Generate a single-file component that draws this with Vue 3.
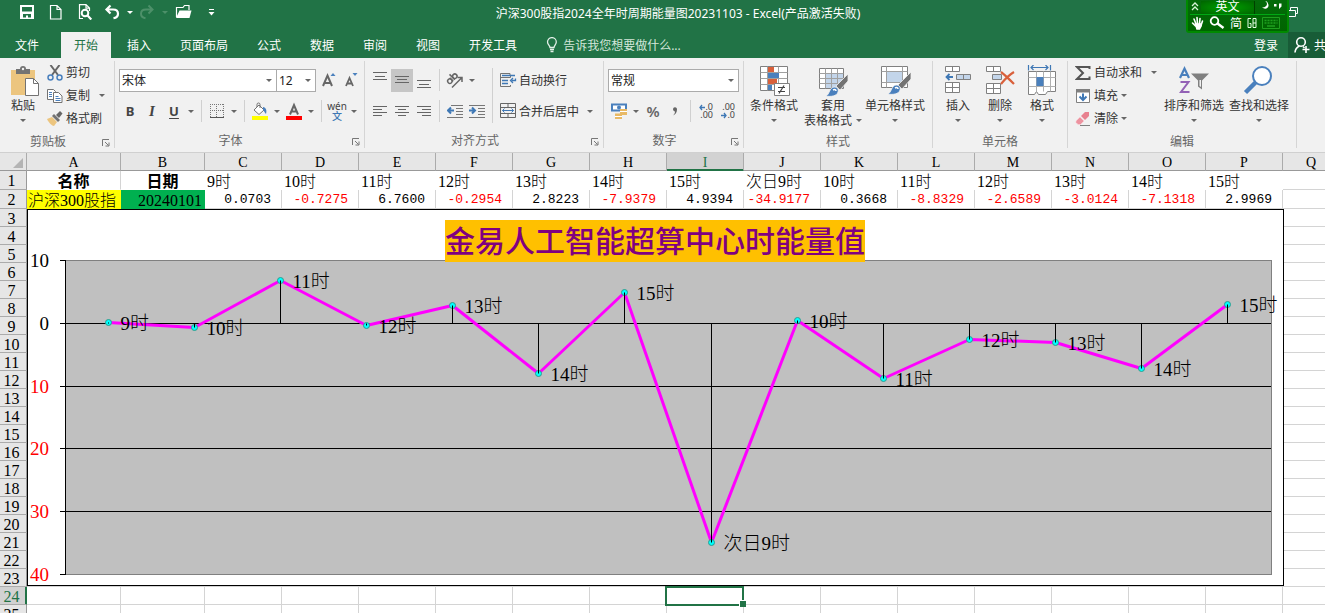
<script setup>
import { ref } from 'vue'

const tabs = ['开始', '插入', '页面布局', '公式', '数据', '审阅', '视图', '开发工具']
const activeTab = ref('开始')
const fontName = ref('宋体')
const fontSize = ref('12')
const numberFormat = ref('常规')

const letters = 'ABCDEFGHIJKLMNOPQ'.split('')
const hours = ['9时', '10时', '11时', '12时', '13时', '14时', '15时', '次日9时', '10时', '11时', '12时', '13时', '14时', '15时']
const values = [0.0703, -0.7275, 6.76, -0.2954, 2.8223, -7.9379, 4.9394, -34.9177, 0.3668, -8.8329, -2.6589, -3.0124, -7.1318, 2.9969]
const emptyRows = Array.from({ length: 23 }, (_, i) => i + 3)

const plot = { left: 39, right: 1245, top: 51, bottom: 365 }
const max = 10
const min = -40
const yOf = (v) => plot.top + ((max - v) / (max - min)) * (plot.bottom - plot.top)
const lineY = (v) => Math.round(yOf(v)) + 0.5
const step = (plot.right - plot.left) / values.length
const points = values.map((v, i) => ({
  x: Math.floor(plot.left + step * (i + 0.5)) - 0.5,
  y: Math.round(yOf(v)) + 0.5,
  label: hours[i],
}))
const polyline = points.map((p) => `${p.x},${p.y}`).join(' ')
const ticks = [10, 0, -10, -20, -30, -40]
</script>

<template>
  <div class="app">
    <header class="top">
      <div class="titlebar">
        <div class="qat">
          <button class="q w30" aria-label="保存">
            <svg width="16" height="16" viewBox="0 0 16 16"><path fill="#fff" fill-rule="evenodd" d="M1 1h14v14H1zM3 3v4.500h10V3zM4 10v3.500h3V11.500h2v2h3V10z" /></svg>
          </button>
          <button class="q w30" aria-label="新建">
            <svg width="16" height="16" viewBox="0 0 16 16" fill="none" stroke="#fff" stroke-width="1.2"><path d="M2.500 1.500h6.500l4 4v9.500H2.500z M9 1.500v4h4" /></svg>
          </button>
          <button class="q w30" aria-label="打印预览">
            <svg width="16" height="16" viewBox="0 0 16 16" fill="none" stroke="#fff" stroke-width="1.200"><path d="M6 14.500H2.500V.600h6.500l3.500 3.500V7M9 .600v3.500h3.500" /><circle cx="8" cy="9" r="3.300" stroke-width="2" /><path d="M10.500 11.500l3.800 4" stroke-width="2.200" /></svg>
          </button>
          <button class="q w26" aria-label="撤消">
            <svg width="16" height="16" viewBox="0 0 16 16" fill="none" stroke="#fff" stroke-width="2.200"><path d="M6.500 1.500L2.500 5.500l4 4M2.500 5.500h6.500c3.500 0 5 1.700 5 4.200 0 2.400-1.500 4-4.500 4.500" /></svg>
          </button>
          <button class="q w10" aria-label="撤消列表"><i class="caret light"></i></button>
          <button class="q w26" aria-label="重做" disabled>
            <svg width="16" height="16" viewBox="0 0 16 16" fill="none" stroke="#4d9069" stroke-width="2"><path d="M9.500 1.500l4 4-4 4M13.500 5.500H7C3.500 5.500 2 7.200 2 9.700c0 2.400 1.500 4 4.500 4.500" /></svg>
          </button>
          <button class="q w10" aria-label="重做列表" disabled><i class="caret dim"></i></button>
          <button class="q w28" aria-label="打开">
            <svg width="17" height="16" viewBox="0 0 17 16"><path d="M1.500 13V3.500H8L9.500 1.500H14V6" fill="none" stroke="#fff" stroke-width="1.200" /><path d="M1 14L4.500 6.500H16.500L14.500 14z" fill="#fff" /></svg>
          </button>
          <button class="q w28" aria-label="自定义快速访问工具栏">
            <svg width="7" height="8" viewBox="0 0 7 8" fill="#fff"><path d="M1 1h5v1H1zM.5 4h6l-3 3.500z" /></svg>
          </button>
        </div>
        <h1 class="title">沪深300股指2024全年时周期能量图20231103 - Excel(产品激活失败)</h1>
        <div class="winctl">
          <button class="q" aria-label="还原">
            <svg width="12" height="12" viewBox="0 0 12 12" fill="none" stroke="#fff"><path d="M.5 4.500h8v6h-8zM3.500 4V1.500h7v6H9" /></svg>
          </button>
        </div>
      </div>

      <nav class="tabs">
        <button class="tab file">文件</button>
        <button v-for="t in tabs" :key="t" class="tab" :class="{ active: t === activeTab }" @click="activeTab = t">{{ t }}</button>
        <label class="tell">
          <svg width="12" height="16" viewBox="0 0 12 16" fill="none" stroke="#e3efe8" stroke-width="1.300"><path d="M4 10.500C4 8.500 1.500 7.500 1.500 5a4.300 4.300 0 0 1 8.800 0C10.300 7.500 8 8.500 8 10.500zM4 12.500h4M4.500 14.500h3" /></svg>
          <input type="text" placeholder="告诉我您想要做什么..." aria-label="告诉我您想要做什么" />
        </label>
        <span class="grow"></span>
        <button class="login">登录</button>
        <button class="share">
          <svg width="16" height="18" viewBox="0 0 16 18" fill="none" stroke="#fff" stroke-width="1.600"><circle cx="7" cy="6" r="4.300" /><path d="M1 16.500c.3-3.500 2-5.500 4.500-6.500M9 10.500l1.500 1.500M8.500 13.500h7M12 10v7" /></svg>
          <span>共享</span>
        </button>
      </nav>

      <div class="ime" role="toolbar" aria-label="输入法">
        <div class="ime-row">
          <svg width="10" height="12" viewBox="0 0 10 12" fill="none" stroke="#d8f5d8" stroke-width="1.300"><path d="M2 5l3-3 3 3M2 9l3-3 3 3" /></svg>
          <button class="ime-lang">英文</button>
          <svg width="30" height="12" viewBox="0 0 30 12" fill="#fff"><path d="M9 0c3 1.500 3 6-3 6.500 4 3 8-.5 6-4C11.500 1 11 0 9 0zM18 3h2.500v2.500H18zM23 2.500h2.500v3L23 8z" /></svg>
        </div>
        <div class="ime-row low">
          <svg width="13" height="14" viewBox="0 0 13 14" fill="none" stroke="#fff" stroke-width="1.600" stroke-linecap="round"><path d="M3 3l2 5M6 1.500l.5 6M9 2.500L8.500 8M11.500 5L10 9.500M1.500 7l3 3" /><path d="M4.500 8h5.500v2l-1.500 3H6z" fill="#fff" /></svg>
          <svg width="16" height="14" viewBox="0 0 16 14" fill="none" stroke="#fff"><circle cx="5.500" cy="5" r="3.800" stroke-width="1.800" /><path d="M8.500 7.500l6 4.500" stroke-width="2.500" /></svg>
          <span>简</span>
          <svg width="10" height="12" viewBox="0 0 10 12" fill="none" stroke="#e8ffe8"><path d="M4 1.500H1v9h3V6.500H2.500M6 1.500h3v9H6zM6 6h3" /></svg>
          <svg width="18" height="12" viewBox="0 0 18 12" fill="none" stroke="#1fa01f"><path d="M.5.500h17v11H.5z" /><path d="M2.500 3.500h13M2.500 6h13" stroke-dasharray="2 1" stroke-width="1.500" /><path d="M5 9h8" stroke-width="1.500" /></svg>
        </div>
      </div>
    </header>

    <section class="ribbon" aria-label="功能区">
      <div class="group g-clip">
        <div class="body">
          <button class="big w46">
            <svg width="32" height="32" viewBox="0 0 32 32"><path d="M4 5h24v25H4z" fill="#ecc57f" /><path d="M9 4h4a3 3 0 0 1 6 0h4v5H9z" fill="#737373" /><circle cx="16" cy="4" r="1.200" fill="#f1f1f1" /><path d="M18.500 13.500h8l5 5v12h-13z" fill="#fff" stroke="#737373" /><path d="M26.500 13.500v5h5" fill="none" stroke="#737373" /></svg>
            <span>粘贴</span><span class="line"><i class="caret"></i></span>
          </button>
          <div class="three">
            <button class="small">
              <svg width="16" height="16" viewBox="0 0 16 16" fill="none"><path d="M3.500 0L11 10M12.500 0L5 10" stroke="#666" stroke-width="2" /><circle cx="3.500" cy="12.500" r="2.500" stroke="#4a80bd" stroke-width="1.500" /><circle cx="12.500" cy="12.500" r="2.500" stroke="#4a80bd" stroke-width="1.500" /></svg>剪切
            </button>
            <button class="small">
              <svg width="16" height="16" viewBox="0 0 16 16" fill="#fff" stroke="#737373"><path d="M.5 1.500h6l2 2v8h-8z" /><path d="M6.500 4.500h5l3.500 3.500v6.500H6.500z" /><path d="M2 4.500h3M2 6.500h3M2 8.500h3M8.500 8.500h3M8.500 10.500h5M8.500 12.500h5" stroke="#4a80bd" /></svg>复制<i class="caret gap"></i>
            </button>
            <button class="small">
              <svg width="16" height="16" viewBox="0 0 16 16"><path d="M0 8l5-2 5 5-3 4c-2 0-5-3-7-7z" fill="#ecc57f" /><path d="M5 5l2-2 6 6-2 2z" fill="#737373" /><path d="M9 4l4-4 2.500 2.500L12 7z" fill="#666" /></svg>格式刷
            </button>
          </div>
        </div>
        <div class="foot"><span>剪贴板</span><button class="launch" aria-label="剪贴板设置"><svg width="8" height="8" viewBox="0 0 8 8" fill="none" stroke="#777"><path d="M.5 7V.500H7M3 3l3.500 3.500M7 3.500V7H3.500" /></svg></button></div>
      </div>

      <div class="group g-font">
        <div class="body rows">
          <div class="row">
            <span class="combo c-name"><select v-model="fontName" aria-label="字体"><option>宋体</option><option>黑体</option></select><i class="caret"></i></span>
            <span class="combo c-size"><select v-model="fontSize" aria-label="字号"><option>12</option><option>14</option></select><i class="caret"></i></span>
            <button class="ib" aria-label="增大字号"><svg width="16" height="18" viewBox="0 0 16 18"><path d="M2 15L6.500 4.500L11 15M3.500 12h6" fill="none" stroke="#666" stroke-width="2" /><path d="M9.500 5L12 2l2.500 3z" fill="#4a80bd" /></svg></button>
            <button class="ib" aria-label="减小字号"><svg width="16" height="18" viewBox="0 0 16 18"><path d="M3 15L6.500 7L10 15M4.500 12.500h4.500" fill="none" stroke="#666" stroke-width="1.800" /><path d="M9.500 2L12 5l2.500-3z" fill="#4a80bd" /></svg></button>
          </div>
          <div class="row">
            <button class="ib bold">B</button><button class="ib ital">I</button><button class="ib und">U</button><button class="cb" aria-label="下划线选项"><i class="caret"></i></button>
            <i class="sep"></i>
            <button class="ib" aria-label="边框"><svg width="14" height="14" viewBox="0 0 14 14" fill="none" stroke="#777"><path d="M.5 0v13M13.500 0v13M6.500 0v13M0 .500h14M0 6.500h14" stroke-dasharray="1 1" /><path d="M0 13.500h14" stroke="#555" /></svg></button><button class="cb" aria-label="边框选项"><i class="caret"></i></button>
            <i class="sep"></i>
            <button class="ib" aria-label="填充颜色"><svg width="18" height="18" viewBox="0 0 18 18"><path d="M3 8l5-5 5 5-5 4.500z" fill="#fff" stroke="#737373" /><path d="M6 5V2.500a1.500 1.500 0 0 1 3 0V6" fill="none" stroke="#737373" /><path d="M12 5c3 .5 4 3 3 7-1.500-1-1.500-3-3-4z" fill="#4a80bd" /><path d="M1 14h16v4H1z" fill="#ff0" /></svg></button><button class="cb" aria-label="填充颜色选项"><i class="caret"></i></button>
            <button class="ib" aria-label="字体颜色"><svg width="16" height="18" viewBox="0 0 16 18"><path d="M4 12.500L8 3l4 9.500M5.500 9.500h5" fill="none" stroke="#666" stroke-width="2" /><path d="M0 14h16v4H0z" fill="red" /></svg></button><button class="cb" aria-label="字体颜色选项"><i class="caret"></i></button>
            <i class="sep"></i>
            <button class="ib pinyin"><span>wén</span><b>文</b></button><button class="cb" aria-label="拼音选项"><i class="caret"></i></button>
          </div>
        </div>
        <div class="foot"><span>字体</span><button class="launch" aria-label="字体设置"><svg width="8" height="8" viewBox="0 0 8 8" fill="none" stroke="#777"><path d="M.5 7V.500H7M3 3l3.500 3.500M7 3.500V7H3.500" /></svg></button></div>
      </div>

      <div class="group g-align">
        <div class="body">
          <div class="rows al">
            <div class="row">
              <button class="ib" aria-label="顶端对齐"><svg width="14" height="18" viewBox="0 0 14 18" stroke="#666"><path d="M0 1.500h14M2 5.500h10M0 8.500h14" /></svg></button>
              <button class="ib on" aria-label="垂直居中"><svg width="14" height="18" viewBox="0 0 14 18" stroke="#666"><path d="M0 5.500h14M2 8.500h10M0 11.500h14" /></svg></button>
              <button class="ib" aria-label="底端对齐"><svg width="14" height="18" viewBox="0 0 14 18" stroke="#666"><path d="M0 9.500h14M2 13.500h10M0 16.500h14" /></svg></button>
              <i class="sep"></i>
              <button class="ib" aria-label="方向"><svg width="18" height="18" viewBox="0 0 18 18" fill="none" stroke="#666" stroke-width="1.500"><g transform="rotate(-45 6 8)"><circle cx="3" cy="8" r="2.200" /><path d="M5.300 5.500v5M7.500 3v7.500" /><circle cx="10" cy="8" r="2.200" /></g><path d="M6 16.500L15.500 7M11.500 6.500H16V11" /></svg></button><button class="cb" aria-label="方向选项"><i class="caret"></i></button>
            </div>
            <div class="row">
              <button class="ib" aria-label="左对齐"><svg width="14" height="12" viewBox="0 0 14 12" stroke="#666"><path d="M0 1.500h14M0 4.500h9M0 7.500h14M0 10.500h9" /></svg></button>
              <button class="ib" aria-label="居中"><svg width="14" height="12" viewBox="0 0 14 12" stroke="#666"><path d="M0 1.500h14M3 4.500h8M0 7.500h14M3 10.500h8" /></svg></button>
              <button class="ib" aria-label="右对齐"><svg width="14" height="12" viewBox="0 0 14 12" stroke="#666"><path d="M0 1.500h14M5 4.500h9M0 7.500h14M5 10.500h9" /></svg></button>
              <i class="sep"></i>
              <button class="ib" aria-label="减少缩进"><svg width="16" height="14" viewBox="0 0 16 14" stroke="#777" fill="none"><path d="M4 1.500h12M9 4.500h7M9 7.500h7M9 10.500h7M0 13.500h16" /><path d="M7 6.500H1M4 3.500L1 6.500l3 3" stroke="#3f78b5" stroke-width="2" /></svg></button>
              <button class="ib" aria-label="增加缩进"><svg width="16" height="14" viewBox="0 0 16 14" stroke="#777" fill="none"><path d="M0 1.500h16M9 4.500h7M9 7.500h7M9 10.500h7M0 13.500h16" /><path d="M0 6.500h6M3 3.500l3 3-3 3" stroke="#3f78b5" stroke-width="2" /></svg></button>
            </div>
          </div>
          <i class="sep tall"></i>
          <div class="rows">
            <button class="row small">
              <svg width="17" height="16" viewBox="0 0 17 16" fill="none" stroke="#737373"><path d="M10 3.500V1.500H.5v13h10V13M.5 5.500h10v-2" /><path d="M2 3.500h13M2 8.500h6M2 11.500h6M15.500 6.500v2h-4M13 6l-2.500 2.500L13 11" stroke="#3f78b5" stroke-width="1.300" /></svg>自动换行
            </button>
            <button class="row small">
              <svg width="17" height="16" viewBox="0 0 17 16" fill="none" stroke="#666"><path d="M.5.500h15v14H.5zM.5 4.500h15M.5 10.500h15M8 .500v4M8 10.500v4" /><path d="M2.500 7.500h11M4.500 5.500l-2 2 2 2M11.500 5.500l2 2-2 2" stroke="#3f78b5" /></svg>合并后居中<i class="caret gap"></i>
            </button>
          </div>
        </div>
        <div class="foot"><span>对齐方式</span><button class="launch" aria-label="对齐设置"><svg width="8" height="8" viewBox="0 0 8 8" fill="none" stroke="#777"><path d="M.5 7V.500H7M3 3l3.500 3.500M7 3.500V7H3.500" /></svg></button></div>
      </div>

      <div class="group g-num">
        <div class="body rows">
          <div class="row">
            <span class="combo c-num"><select v-model="numberFormat" aria-label="数字格式"><option>常规</option><option>数值</option></select><i class="caret"></i></span>
          </div>
          <div class="row">
            <button class="ib" aria-label="会计数字格式"><svg width="17" height="16" viewBox="0 0 17 16"><path d="M1 1.500h14v6H1z" fill="#fff" stroke="#4a80bd" stroke-width="2" /><circle cx="8" cy="4.500" r="2" fill="#4a80bd" /><path d="M9 6h7v6H9zM4 10.500h7V16H4z" fill="#e8b965" /><path d="M9 8.500h7M4 13.500h7" stroke="#fff" /></svg></button><button class="cb" aria-label="会计选项"><i class="caret"></i></button>
            <button class="ib pct">%</button>
            <button class="ib" aria-label="千位分隔"><svg width="6" height="9" viewBox="0 0 6 9" fill="#666"><path d="M1 2a2 2 0 1 1 4 .500C5 5.500 3.500 7.500 1 8.500 2.500 7 3 6 3 4.500 2 4.500 1 3.500 1 2z" /></svg></button>
            <i class="sep"></i>
            <button class="ib dec" aria-label="增加小数位数"><span><svg width="6" height="7" viewBox="0 0 6 7" fill="none" stroke="#3f78b5" stroke-width="1.300"><path d="M6 3.500H1M3 1L1 3.500 3 6" /></svg>.0</span><span>.00</span></button>
            <button class="ib dec" aria-label="减少小数位数"><span>.00</span><span><svg width="6" height="7" viewBox="0 0 6 7" fill="none" stroke="#3f78b5" stroke-width="1.300"><path d="M0 3.500h5M3 1l2 2.500L3 6" /></svg>.0</span></button>
          </div>
        </div>
        <div class="foot"><span>数字</span><button class="launch" aria-label="数字设置"><svg width="8" height="8" viewBox="0 0 8 8" fill="none" stroke="#777"><path d="M.5 7V.500H7M3 3l3.500 3.500M7 3.500V7H3.500" /></svg></button></div>
      </div>

      <div class="group g-style">
        <div class="body">
          <button class="big w60">
            <svg width="32" height="32" viewBox="0 0 32 32"><path d="M2.500 1.500h27v24h-27z" fill="#fff" stroke="#808080" /><path d="M2.500 7.500h27M2.500 13.500h27M2.500 19.500h27M9.500 1.500v24M20.500 1.500v24" stroke="#a0a0a0" /><path d="M10 2h6v5h-6zM10 14h9v5h-9z" fill="#d9603b" /><path d="M10 8h11v5H10zM10 20h4v5h-4z" fill="#4a80bd" /><path d="M16.500 18.500h15v12h-15z" fill="#fff" stroke="#808080" /><path d="M20 22.500h7M20 26.500h7M26 20.500l-5 8" stroke="#444" stroke-width="1.200" /></svg>
            <span>条件格式</span><span class="line"><i class="caret"></i></span>
          </button>
          <button class="big w58">
            <svg width="32" height="32" viewBox="0 0 32 32"><path d="M2.500 3.500h24v20h-24z" fill="#fff" stroke="#808080" /><path d="M9 9h17v14H9z" fill="#c3d5ea" /><path d="M2.500 8.500h24M2.500 13.500h24M2.500 18.500h24M8.500 3.500v20M14.500 3.500v20M20.500 3.500v20" stroke="#a0a0a0" /><path d="M31 9v7l-8 9-4-4z" fill="#737373" stroke="#f1f1f1" stroke-width=".8" /><path d="M9 31c4-2 3-8 8-9 3 0 5 2 4 5-1 4-7 5-12 4z" fill="#4a80bd" stroke="#f1f1f1" stroke-width=".8" /><path d="M16 25c2-1 3 0 3 1" stroke="#fff" fill="none" stroke-width="1.500" /></svg>
            <span>套用</span><span class="line">表格格式<i class="caret"></i></span>
          </button>
          <button class="big w66">
            <svg width="32" height="32" viewBox="0 0 32 32"><path d="M2.500 1.500h26v21h-26z" fill="#fff" stroke="#808080" /><path d="M2.500 6.500h26M2.500 17.500h26M7.500 1.500v21M23.500 1.500v21" stroke="#a0a0a0" /><path d="M8 7h15v10H8z" fill="#c3d5ea" /><path d="M32 7v7l-9 10-4-4z" fill="#737373" stroke="#f1f1f1" stroke-width=".8" /><path d="M9 29c4-2 3-8 8-9 3 0 5 2 4 5-1 4-7 5-12 4z" fill="#4a80bd" stroke="#f1f1f1" stroke-width=".8" /><path d="M16 23c2-1 3 0 3 1" stroke="#fff" fill="none" stroke-width="1.500" /></svg>
            <span>单元格样式</span><span class="line"><i class="caret"></i></span>
          </button>
        </div>
        <div class="foot"><span>样式</span></div>
      </div>

      <div class="group g-cell">
        <div class="body">
          <button class="big w42">
            <svg width="32" height="32" viewBox="0 0 32 32" fill="#fff" stroke="#808080"><path d="M3.500 1.500h14v5h-14zM10.500 1.500v5M3.500 17.500h14v10h-14zM10.500 17.500v10M3.500 22.500h14" /><path d="M14.500 9.500h14v5h-14zM21.500 9.500v5" fill="#c3d5ea" /><path d="M11 12H4.500M7.500 9L4.500 12l3 3" fill="none" stroke="#3f78b5" stroke-width="1.800" /></svg>
            <span>插入</span><span class="line"><i class="caret"></i></span>
          </button>
          <button class="big w42">
            <svg width="32" height="32" viewBox="0 0 32 32" fill="#fff" stroke="#808080"><path d="M2.500 1.500h14v5h-14zM9.500 1.500v5M2.500 18.500h14v10h-14zM9.500 18.500v10M2.500 23.500h14" /><path d="M8.500 9.500h9v5h-9z" fill="#c3d5ea" /><path d="M17 7c4 3 9 8 13 12M30 7c-5 3-9 7-13 12" fill="none" stroke="#d9603b" stroke-width="2.200" /></svg>
            <span>删除</span><span class="line"><i class="caret"></i></span>
          </button>
          <button class="big w42">
            <svg width="32" height="32" viewBox="0 0 32 32" fill="#fff" stroke="#808080"><path d="M2.500 6.500h27v20h-8l-2 3h-7l-2-3-2 3h-6z" /><path d="M2.500 12.500h27M2.500 21.500h27M10.500 6.500v20M17.500 6.500v20M24.500 6.500v20" stroke="#b0b0b0" /><path d="M10.500 12h7v9h-7z" fill="#4a80bd" stroke="none" /><path d="M2.500 0v5.500M24.500 0v5.500M5 2.500h17M7.500 0L5 2.500 7.500 5M19.500 0L22 2.500 19.500 5" fill="none" stroke="#3f78b5" stroke-width="1.200" /></svg>
            <span>格式</span><span class="line"><i class="caret"></i></span>
          </button>
        </div>
        <div class="foot"><span>单元格</span></div>
      </div>

      <div class="group g-edit">
        <div class="body">
          <div class="three e3">
            <button class="small">
              <svg width="16" height="16" viewBox="0 0 16 16" fill="none" stroke="#555" stroke-width="2"><path d="M14.500 4V2H2l6 6-6 6h12.500v-2.500" /></svg>自动求和<i class="caret gap"></i>
            </button>
            <button class="small">
              <svg width="16" height="16" viewBox="0 0 16 16" fill="none"><path d="M1.500 1.500h13v13h-13z" fill="#fff" stroke="#808080" /><path d="M1 1h14v3.500H1z" fill="#808080" /><path d="M8 5.500v6M4.500 8.500L8 12l3.500-3.500" stroke="#3f78b5" stroke-width="2" /></svg>填充<i class="caret"></i>
            </button>
            <button class="small">
              <svg width="16" height="16" viewBox="0 0 16 16"><path d="M6 5l4-4h4v4l-4 4z" fill="#e8818f" /><path d="M5 6l4 4-3.500 3.500H3l-2-2V10z" fill="#ed93a0" stroke="#f8d5da" stroke-width=".6" /><path d="M5 14.500h10" stroke="#808080" /></svg>清除<i class="caret"></i>
            </button>
          </div>
          <button class="big w66">
            <svg width="32" height="32" viewBox="0 0 32 32" fill="none"><path d="M2 13L6.500 3.500L11 13M3.500 10h6" stroke="#4a80bd" stroke-width="2.200" /><path d="M2.500 17h8L3 27h8.500" stroke="#9361b5" stroke-width="2" /><path d="M13 8.500h18l-7 7v9l-4-3v-6z" fill="#808080" /><path d="M21.500 15h1.500v7l-1.500-1z" fill="#f1f1f1" /></svg>
            <span>排序和筛选</span><span class="line"><i class="caret"></i></span>
          </button>
          <button class="big w64">
            <svg width="32" height="32" viewBox="0 0 32 32" fill="none"><path d="M2.500 27.500L13 17" stroke="#4a80bd" stroke-width="4.500" /><circle cx="19" cy="11" r="9" fill="#fff" stroke="#4a80bd" stroke-width="2" /></svg>
            <span>查找和选择</span><span class="line"><i class="caret"></i></span>
          </button>
        </div>
        <div class="foot"><span>编辑</span></div>
      </div>
    </section>

    <main class="sheet">
      <table class="grid">
        <colgroup>
          <col class="k-head" /><col class="k-a" /><col class="k-b" />
          <col v-for="n in 14" :key="n" class="k-n" />
          <col class="k-q" /><col />
        </colgroup>
        <thead>
          <tr>
            <th class="corner"><svg width="10" height="10" viewBox="0 0 10 10"><path d="M10 0v10H0z" fill="#b4b4b4" /></svg></th>
            <th v-for="l in letters" :key="l" :class="{ sel: l === 'I' }">{{ l }}</th>
            <th></th>
          </tr>
        </thead>
        <tbody>
          <tr class="r1">
            <th>1</th>
            <td class="hd edge">名称</td>
            <td class="hd">日期</td>
            <td v-for="(h, i) in hours" :key="i">{{ h }}</td>
            <td class="blank"></td><td class="blank"></td>
          </tr>
          <tr class="r2">
            <th>2</th>
            <td class="name">沪深300股指</td>
            <td class="date">20240101</td>
            <td v-for="(v, i) in values" :key="i" class="num" :class="{ neg: v < 0 }">{{ v.toFixed(4) }}</td>
            <td></td><td></td>
          </tr>
          <tr v-for="r in emptyRows" :key="r">
            <th :class="{ sel: r === 24 }">{{ r }}</th>
            <td v-for="l in letters" :key="l" :class="{ cursor: r === 24 && l === 'I' }"></td>
            <td></td>
          </tr>
        </tbody>
      </table>

      <div class="chart">
        <svg width="1257" height="377" viewBox="0 0 1257 377">
          <rect x="0.5" y="0.5" width="1256" height="376" fill="#fff" stroke="#000" />
          <rect :x="plot.left - 0.5" :y="plot.top + 0.5" :width="plot.right - plot.left" :height="plot.bottom - plot.top" fill="#c0c0c0" stroke="#808080" />
          <g stroke="#000">
            <line v-for="t in ticks.slice(1, 5)" :key="t" :x1="plot.left" :x2="plot.right - 1" :y1="lineY(t)" :y2="lineY(t)" />
            <line v-for="t in ticks" :key="'k' + t" :x1="plot.left - 6" :x2="plot.left" :y1="lineY(t)" :y2="lineY(t)" />
            <line :x1="plot.left - 0.5" :x2="plot.left - 0.5" :y1="plot.top" :y2="plot.bottom + 1" />
          </g>
          <text v-for="t in ticks" :key="'t' + t" class="lbl" text-anchor="end" x="22" :y="lineY(t) + 6" :fill="t < 0 ? '#f00' : '#000'">{{ Math.abs(t) }}</text>
          <polyline :points="polyline" fill="none" stroke="#f0f" stroke-width="3" stroke-linejoin="bevel" />
          <circle v-for="p in points" :key="p.x" :cx="p.x" :cy="p.y" r="3" fill="#0ff" stroke="#2f9c8c" />
          <line v-for="p in points" :key="'d' + p.x" :x1="p.x" :x2="p.x" :y1="lineY(0)" :y2="p.y" stroke="#000" />
          <text v-for="p in points" :key="'l' + p.x" class="lbl" :x="p.x + 12" :y="p.y + 7">{{ p.label }}</text>
        </svg>
        <h2 class="chart-title">金易人工智能超算中心时能量值</h2>
      </div>
    </main>
  </div>
</template>

<style>
body { margin: 0; overflow: hidden; }
</style>

<style scoped>
.app {
  height: 100vh; display: flex; flex-direction: column; overflow: hidden; background: #fff;
  font: 12px/15px "Noto Sans", "Noto Sans CJK SC", sans-serif; color: #444;
}
.app * { box-sizing: border-box; }
button, select, input { font: inherit; color: inherit; border: 0; padding: 0; margin: 0; background: none; }
button { display: flex; align-items: center; justify-content: center; white-space: nowrap; flex: none; }
svg { display: block; flex: none; }
.caret { flex: none; width: 0; height: 0; border: 3px solid transparent; border-top-color: #666; border-bottom: 0; }
.caret.light { border-top-color: #fff; }
.caret.dim { border-top-color: #4d9069; }

.top { position: relative; flex: none; background: #217346; color: #fff; overflow: hidden; }
.titlebar { height: 32px; display: flex; }
.qat { width: 220px; padding-left: 12px; display: flex; height: 24px; align-items: center; }
.q { height: 24px; }
.w30 { width: 29px; }
.w26 { width: 26px; }
.w10 { width: 9px; }
.w28 { width: 28px; }
.title { flex: 1; margin: 0; font-size: 12px; font-weight: 400; line-height: 28px; text-align: center; white-space: nowrap; }
.winctl { width: 189px; padding-right: 26px; display: flex; justify-content: flex-end; }
.tabs { height: 26px; display: flex; gap: 3px; }
.tab { padding: 0 13px; height: 26px; }
.tab.file { width: 54px; margin-right: 4px; }
.tab.active { background: #f1f1f1; color: #217346; }
.tell { display: flex; align-items: center; gap: 5px; padding-left: 13px; color: #d3e6da; }
.tell input { width: 140px; outline: 0; }
.tell input::placeholder { color: #d3e6da; opacity: 1; }
.grow { flex: 1; }
.login { width: 38px; }
.share { width: 37px; padding-left: 6px; gap: 4px; justify-content: flex-start; background: #185c37; overflow: hidden; }

.ime {
  position: absolute; top: 0; right: 36px; width: 103px; height: 33px; padding: 0 2px;
  background: linear-gradient(#046b0a, #006400); border: 2px solid #008a00; border-top: 0; border-radius: 0 0 3px 3px;
}
.ime-row { display: flex; height: 14px; gap: 1px; align-items: center; }
.ime-row.low { height: 17px; gap: 5px; padding-left: 1px; border-top: 1px solid #00a814; }
.ime-lang { width: 54px; height: 13px; line-height: 12px; align-items: flex-start; background: radial-gradient(#00a000, #006400); border-right: 1px solid #004000; }

.ribbon { flex: none; display: flex; padding: 3px 0 4px; background: #f1f1f1; border-bottom: 1px solid #d0d0d0; overflow: hidden; }
.group { flex: none; height: 87px; border-right: 1px solid #d5d5d5; display: flex; flex-direction: column; }
.g-clip { width: 115px; }
.g-font { width: 250px; }
.g-align { width: 239px; }
.g-num { width: 140px; }
.g-style { width: 189px; }
.g-cell { width: 135px; }
.g-edit { width: 229px; }
.body { height: 69px; display: flex; }
.foot { display: flex; padding-top: 4px; text-align: center; color: #666; }
.foot span { flex: 1; }
.launch { width: 18px; height: 15px; padding: 3px 0 0 2px; }
.big { flex-direction: column; justify-content: flex-start; height: 69px; padding-top: 4px; color: #333; }
.big .line { display: flex; height: 15px; align-items: center; justify-content: center; gap: 4px; }
.big svg { margin-bottom: 1px; }
.w46 { width: 46px; }
.w60 { width: 60px; }
.w58 { width: 58px; }
.w66 { width: 66px; }
.w42 { width: 42px; }
.w64 { width: 64px; }
.g-cell .body { padding-left: 4px; }
.three { display: flex; flex-direction: column; }
.small { height: 23px; padding-left: 1px; gap: 3px; justify-content: flex-start; color: #333; }
.gap { margin-left: 6px; }
.e3 { width: 93px; padding-left: 6px; }
.rows { display: flex; flex-direction: column; gap: 1px; padding: 4px 0 0 4px; }
.g-align .body { padding-left: 4px; }
.g-align .rows { padding-left: 0; }
.al { width: 119px; }
.row { height: 30px; display: flex; align-items: center; }
.row.small { height: 30px; padding-left: 3px; gap: 2px; }
.ib { width: 22px; height: 23px; }
.ib.on { background: #c6c6c6; }
.cb { width: 12px; height: 23px; }
.sep { flex: none; width: 1px; height: 22px; margin: 0 4px; background: #d0d0d0; }
.sep.tall { height: 55px; margin-top: 7px; }
.combo { display: grid; height: 23px; border: 1px solid #ababab; background: #fff; align-items: center; }
.combo select { grid-area: 1 / 1; appearance: none; width: 100%; padding-left: 2px; color: #222; outline: 0; }
.combo .caret { grid-area: 1 / 1; justify-self: end; margin-right: 4px; pointer-events: none; }
.c-name { width: 158px; }
.c-size { width: 40px; margin-left: -1px; margin-right: 2px; }
.c-num { width: 131px; }
.bold { font-weight: 700; font-size: 13px; }
.ital { font-family: "Liberation Serif", serif; font-style: italic; font-weight: 700; font-size: 15px; }
.und { font-weight: 700; font-size: 13px; text-decoration: underline; text-underline-offset: 2px; }
.pct { font-size: 15px; font-weight: 600; color: #666; }
.pinyin { flex-direction: column; font-size: 10px; line-height: 10px; }
.pinyin b { color: #3f78b5; font-weight: 500; }
.dec { flex-direction: column; font-size: 9px; line-height: 8px; align-items: flex-end; padding-right: 4px; }
.dec span { display: flex; align-items: center; }

.sheet { position: relative; flex: 1; min-height: 0; overflow: hidden; font: 300 16px/15px "Liberation Serif", "Noto Sans CJK SC", serif; color: #000; }
.grid { table-layout: fixed; width: 100%; min-width: 1340px; border-collapse: separate; border-spacing: 0; }
.k-head { width: 27px; }
.k-a { width: 94px; }
.k-b { width: 84px; }
.k-n { width: 77px; }
.k-q { width: 57px; }
.grid th { height: 18px; padding: 0; font-weight: 300; background: #e6e6e6; border-right: 1px solid #ababab; border-bottom: 1px solid #ababab; overflow: hidden; }
.grid thead th { padding-top: 2px; font-size: 14px; border-bottom-color: #999; }
.grid tbody th { padding: 1px 3px 0 0; border-right-color: #999; }
.grid .corner { padding: 3px 0 0 13px; }
.grid td { height: 18px; padding: 0; border-right: 1px solid #d4d4d4; border-bottom: 1px solid #d4d4d4; white-space: nowrap; }
.grid th.sel { background: #d2d2d2; color: #217346; }
.grid thead th.sel { border-bottom-color: #217346; box-shadow: inset 0 -1px #217346; }
.grid tbody th.sel { border-right-color: #217346; box-shadow: inset -1px 0 #217346; }
.grid .r1 th, .grid .r1 td, .grid .r2 th, .grid .r2 td { height: 19px; }
.grid .r1 td { padding: 2px 0 0 2px; border-color: #fff; }
.grid .r1 .edge { border-right-color: #d4d4d4; }
.grid .r1 .blank { border-color: #d4d4d4; }
.grid .r1 .hd { padding-left: 0; text-align: center; font-weight: 700; }
.grid .name { background: #ff0; padding: 2px 0 0 1px; border-color: #ff0; }
.grid .date { background: #00b050; border-color: #00b050; text-align: right; padding: 2px 2px 0 0; }
.grid .num { font: 13px/15px "Liberation Mono", monospace; text-align: right; padding: 1px 10px 0 0; }
.grid .neg { color: #f00; }
.grid .cursor { position: relative; }
.cursor::before { content: ""; position: absolute; inset: -1px -1px -2px -2px; border: 2px solid #217346; z-index: 1; }
.cursor::after { content: ""; position: absolute; right: -3px; bottom: -3px; width: 6px; height: 6px; background: #217346; border: solid #fff; border-width: 1px 0 0 1px; z-index: 2; }

.chart { position: absolute; top: 56px; left: 27px; display: grid; }
.chart svg { grid-area: 1 / 1; }
.chart-title {
  grid-area: 1 / 1; place-self: start center; margin: 11px 1px 0 0; height: 42px; line-height: 44px;
  font-size: 30px; font-weight: 500; color: #800080; background: #ffc000;
}
.lbl { font-size: 19px; }
</style>
